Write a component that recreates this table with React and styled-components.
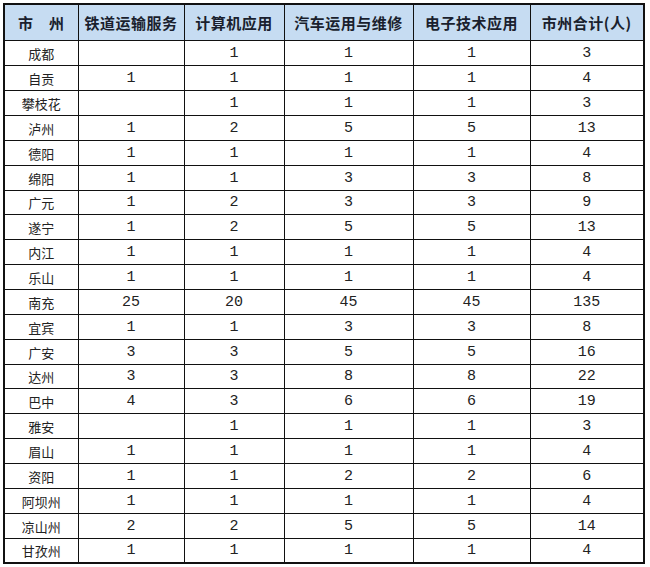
import React from 'react';
import styled, { createGlobalStyle } from 'styled-components';

const GlobalStyle = createGlobalStyle`
  body {
    margin: 0;
    background: #fff;
  }
`;

const headers = ['市　州', '铁道运输服务', '计算机应用', '汽车运用与维修', '电子技术应用', '市州合计(人)'];

const widths = [74, 106, 100, 129, 117, 114];

const rows = [
  ['成都', '', 1, 1, 1, 3],
  ['自贡', 1, 1, 1, 1, 4],
  ['攀枝花', '', 1, 1, 1, 3],
  ['泸州', 1, 2, 5, 5, 13],
  ['德阳', 1, 1, 1, 1, 4],
  ['绵阳', 1, 1, 3, 3, 8],
  ['广元', 1, 2, 3, 3, 9],
  ['遂宁', 1, 2, 5, 5, 13],
  ['内江', 1, 1, 1, 1, 4],
  ['乐山', 1, 1, 1, 1, 4],
  ['南充', 25, 20, 45, 45, 135],
  ['宜宾', 1, 1, 3, 3, 8],
  ['广安', 3, 3, 5, 5, 16],
  ['达州', 3, 3, 8, 8, 22],
  ['巴中', 4, 3, 6, 6, 19],
  ['雅安', '', 1, 1, 1, 3],
  ['眉山', 1, 1, 1, 1, 4],
  ['资阳', 1, 1, 2, 2, 6],
  ['阿坝州', 1, 1, 1, 1, 4],
  ['凉山州', 2, 2, 5, 5, 14],
  ['甘孜州', 1, 1, 1, 1, 4],
];

const App = () => {
  return (
    <Page>
      <GlobalStyle />
      <Table>
        <colgroup>
          {widths.map((w, i) => (
            <col key={i} style={{ width: w }} />
          ))}
        </colgroup>
        <thead>
          <tr>
            {headers.map((h) => (
              <HeadCell key={h}>{h}</HeadCell>
            ))}
          </tr>
        </thead>
        <tbody>
          {rows.map((r, i) => (
            <Row key={r[0]} short={i % 7 === 6}>
              <CityCell>{r[0]}</CityCell>
              {r.slice(1).map((v, j) => (
                <NumCell key={j}>{v}</NumCell>
              ))}
            </Row>
          ))}
        </tbody>
      </Table>
    </Page>
  );
};

export default App;

const Page = styled.div`
  padding: 3px 0 0 3px;
`;

const Table = styled.table`
  border-collapse: collapse;
  table-layout: fixed;
  width: 640px;
  border: 2px solid #111;
`;

const HeadCell = styled.th`
  height: 35px;
  padding: 0;
  background: #c6dcf2;
  border: 1px solid #111;
  font-family: 'Noto Sans CJK SC', sans-serif;
  font-weight: 700;
  font-size: 15px;
  color: #1a1f2e;
  text-align: center;
  white-space: nowrap;
  letter-spacing: 0.5px;
`;

const Row = styled.tr`
  height: ${(props) => (props.short ? '24px' : '25px')};
`;

const CityCell = styled.td`
  padding: 0;
  border: 1px solid #111;
  font-family: 'Noto Sans CJK SC', sans-serif;
  font-size: 13px;
  color: #222;
  text-align: center;
`;

const NumCell = styled.td`
  padding: 0;
  border: 1px solid #111;
  font-family: 'Liberation Mono', monospace;
  font-size: 15px;
  color: #222;
  text-align: center;
`;
